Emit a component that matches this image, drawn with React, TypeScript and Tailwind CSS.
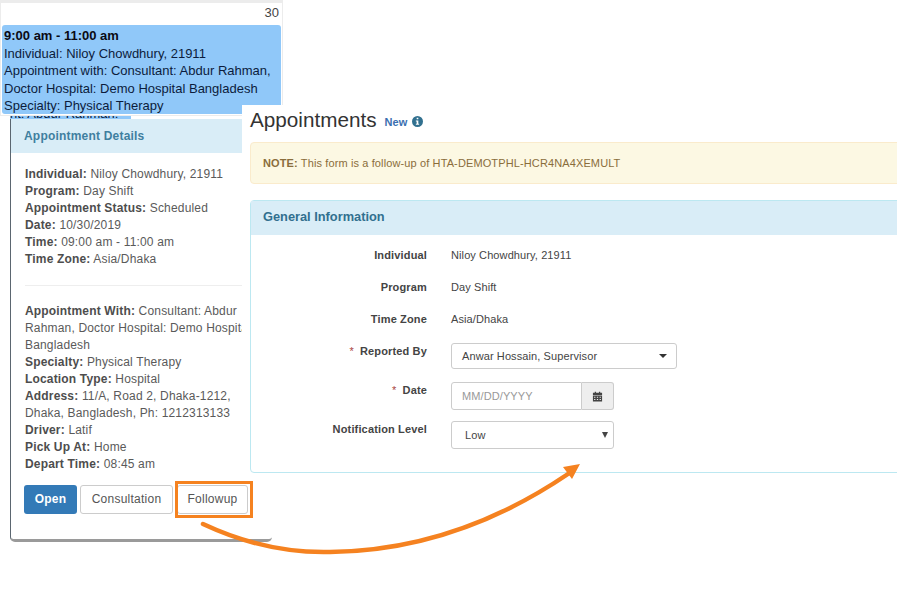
const detailsTop = [
  ["Individual:", "Niloy Chowdhury, 21911"],
  ["Program:", "Day Shift"],
  ["Appointment Status:", "Scheduled"],
  ["Date:", "10/30/2019"],
  ["Time:", "09:00 am - 11:00 am"],
  ["Time Zone:", "Asia/Dhaka"],
];

const detailsBottom = [
  ["Appointment With:", "Consultant: Abdur Rahman, Doctor Hospital: Demo Hospital, Bangladesh"],
  ["Specialty:", "Physical Therapy"],
  ["Location Type:", "Hospital"],
  ["Address:", "11/A, Road 2, Dhaka-1212, Dhaka, Bangladesh, Ph: 1212313133"],
  ["Driver:", "Latif"],
  ["Pick Up At:", "Home"],
  ["Depart Time:", "08:45 am"],
];

function CalendarCell() {
  return (
    <div className="absolute left-0 top-0 z-20 h-[116px] w-[283px] border border-t-[3px] border-[#ececec] bg-white">
      <div className="h-[22px] pr-[3px] pt-[1px] text-right text-[13px] leading-[17px] text-[#444]">30</div>
      <div className="mx-[1px] h-[89px] overflow-hidden rounded-[3px] bg-[#90c8f9] px-[2px] pt-[2px] text-[13px] leading-[17.5px] text-[#0c1c3c]">
        <div className="font-bold text-[#0a0a14]">9:00 am - 11:00 am</div>
        <div>Individual: Niloy Chowdhury, 21911</div>
        <div>Appointment with: Consultant: Abdur Rahman,</div>
        <div>Doctor Hospital: Demo Hospital Bangladesh</div>
        <div>Specialty: Physical Therapy</div>
      </div>
    </div>
  );
}

function DetailsPopover() {
  return (
    <div className="absolute left-[10px] top-[115px] z-10 h-[427px] w-[262px]">
      <div className="flex h-[4px] w-[121px] items-end overflow-hidden bg-[#90c8f9] text-[13px] leading-[10px] text-[#0c1c3c]">
        <span className="whitespace-nowrap">nt: Abdur Rahman:</span>
      </div>
      <div className="h-[423px] rounded-b-[5px] border-b-[3px] border-l border-b-[#9a9a9a] border-l-[#5b6670] bg-white">
        <div className="flex h-[34px] items-center bg-[#d9edf7] pl-[13px] text-[12px] font-bold tracking-[0.2px] text-[#3f7f9f]">
          Appointment Details
        </div>
        <div className="w-[231px] overflow-hidden pl-[14px] pt-[13px] text-[12px] leading-[17.1px] tracking-[0.17px] text-[#5a5a5a]">
          {detailsTop.map(([label, value]) => (
            <div key={label}>
              <b className="text-[#4d4d4d]">{label}</b> {value}
            </div>
          ))}
          <div className="mb-[17px] mt-[16px] h-px bg-[#eeeeee]" />
          <div className="w-[236px]">
            {detailsBottom.map(([label, value]) => (
              <div key={label}>
                <b className="text-[#4d4d4d]">{label}</b> {value}
              </div>
            ))}
          </div>
        </div>
        <div className="flex pl-[13px] pt-[11px] text-[12px] tracking-[0.25px]">
          <button className="h-[29px] w-[53px] rounded-[3px] bg-[#337ab7] font-bold text-white">Open</button>
          <button className="ml-[3px] h-[29px] w-[93px] rounded-[3px] border border-[#cccccc] bg-white text-[#555]">Consultation</button>
          <button className="ml-[4px] h-[29px] w-[71px] rounded-[3px] border border-[#cccccc] bg-white text-[#555]">Followup</button>
        </div>
      </div>
    </div>
  );
}

function FormRow({ label, required, children, className }: { label: string; required?: boolean; children: React.ReactNode; className: string }) {
  return (
    <div className={`flex ${className}`}>
      <div className="w-[176px] text-right text-[11px] font-bold leading-[17px] tracking-[0.15px] text-[#444]">
        {required && <span className="mr-[6px] font-normal text-[#a94442]">*</span>}
        {label}
      </div>
      <div className="ml-[24px] text-[11px] leading-[17px] tracking-[0.1px] text-[#444]">{children}</div>
    </div>
  );
}

function AppointmentsPanel() {
  return (
    <div className="absolute left-[242px] top-[105px] z-30 h-[374px] w-[680px] bg-white pl-[8px]">
      <div className="flex h-[29px] items-center">
        <h1 className="text-[20.7px] leading-[26px] text-[#333]">Appointments</h1>
        <span className="ml-[8px] mt-[5px] text-[11px] font-bold tracking-[0.1px] text-[#3a6fb0]">New</span>
        <svg className="ml-[5px] mt-[4px] h-[11px] w-[11px]" viewBox="0 0 16 16" fill="#31708f">
          <path fillRule="evenodd" d="M8 0a8 8 0 1 1 0 16A8 8 0 0 1 8 0ZM6.8 2.6v2.3h2.4V2.6ZM5.6 6.4v1.5h1.2v3.4H5.6v1.6h4.8v-1.6H9.2V6.4Z" />
        </svg>
      </div>
      <div className="mt-[8px] flex h-[42px] items-center rounded-[4px] border border-[#faebcc] bg-[#fcf8e3] pl-[12px] text-[11px] tracking-[0.12px] text-[#8a6d3b]">
        <b className="mr-[3px]">NOTE:</b> This form is a follow-up of HTA-DEMOTPHL-HCR4NA4XEMULT
      </div>
      <div className="mt-[16px] h-[273px] rounded-[4px] border border-[#bce8f1]">
        <div className="flex h-[34px] items-center bg-[#d9edf7] pb-[3px] pl-[12px] text-[12.8px] font-bold text-[#31708f]">General Information</div>
        <div className="pt-[12px]">
          <FormRow label="Individual" className="h-[32px]">Niloy Chowdhury, 21911</FormRow>
          <FormRow label="Program" className="h-[32px]">Day Shift</FormRow>
          <FormRow label="Time Zone" className="h-[32px]">Asia/Dhaka</FormRow>
          <FormRow label="Reported By" required className="h-[39px]">
            <div className="flex h-[26px] w-[226px] items-center justify-between rounded-[3px] border border-[#cccccc] pl-[10px] pr-[9px]">
              Anwar Hossain, Supervisor
              <span className="h-0 w-0 border-x-[4px] border-t-[4px] border-x-transparent border-t-[#333]" />
            </div>
          </FormRow>
          <FormRow label="Date" required className="h-[39px]">
            <div className="flex h-[28px] w-[163px]">
              <div className="flex w-[131px] items-center rounded-l-[3px] border border-[#cccccc] pl-[10px] text-[#999]">MM/DD/YYYY</div>
              <div className="flex flex-1 items-center justify-center rounded-r-[3px] border border-l-0 border-[#cccccc] bg-[#eeeeee]">
                <svg className="h-[11px] w-[11px]" viewBox="0 0 12 12" fill="#444">
                  <path d="M1 2h2V.7h1.4V2h3.2V.7H9V2h2v2.5H1ZM1 5.3h10V11.4H1ZM2.3 6.4v1h1.4v-1Zm3 0v1h1.4v-1Zm3 0v1h1.4v-1ZM2.3 8.7v1h1.4v-1Zm3 0v1h1.4v-1Zm3 0v1h1.4v-1Z" fillRule="evenodd" />
                </svg>
              </div>
            </div>
          </FormRow>
          <FormRow label="Notification Level" className="h-[28px]">
            <div className="flex h-[28px] w-[163px] items-center justify-between rounded-[3px] border border-[#cccccc] pl-[13px] pr-[5px]">
              Low
              <span className="h-0 w-0 border-x-[3.5px] border-t-[6px] border-x-transparent border-t-[#444]" />
            </div>
          </FormRow>
        </div>
      </div>
    </div>
  );
}

export default function App() {
  return (
    <div className="relative h-[594px] w-[897px] overflow-hidden bg-white font-['Liberation_Sans',Arial,sans-serif]">
      <DetailsPopover />
      <CalendarCell />
      <AppointmentsPanel />
      {/* callout box and arrow drawn over the screenshots */}
      <div className="absolute left-[175px] top-[481px] z-40 h-[37px] w-[78px] border-[3px] border-[#f58220]" />
      <svg className="absolute left-0 top-0 z-40" width="897" height="594" fill="none">
        <path d="M203 524C250 546 290 553 330 552C420 551 500 520 568 474" stroke="#f58220" strokeWidth="4.5" strokeLinecap="round" />
        <path d="M580 464L563 467L572 479Z" fill="#f58220" />
      </svg>
    </div>
  );
}
